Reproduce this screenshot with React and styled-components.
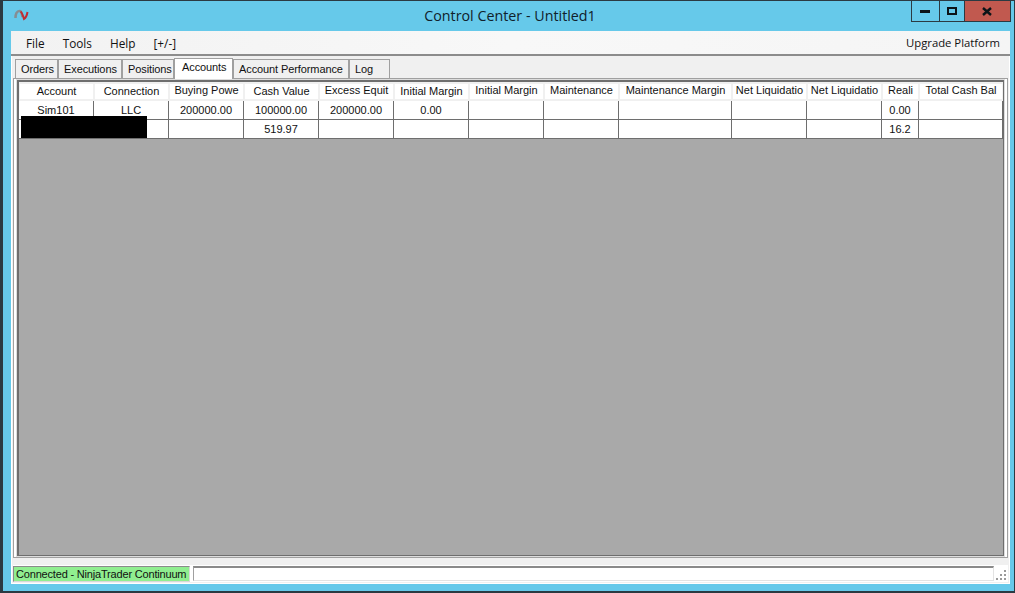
import React from 'react';
import styled, { createGlobalStyle } from 'styled-components';

const GlobalStyle = createGlobalStyle`
  html, body {
    margin: 0;
    padding: 0;
    width: 1015px;
    height: 593px;
    overflow: hidden;
    background: #66c9ea;
  }
  * {
    box-sizing: border-box;
  }
`;

const Window = styled.div`
  display: flex;
  flex-direction: column;
  width: 1015px;
  height: 593px;
  background: #66c9ea;
  border-top: 1px solid #2b3a42;
  border-left: 3px solid #2b3a42;
  border-right: 1px solid #2b3a42;
  border-bottom: 2px solid #2b3a42;
  font-family: 'Liberation Sans', Arial, sans-serif;
  font-size: 11px;
  color: #111;
`;

const TitleBar = styled.div`
  display: grid;
  grid-template-columns: 1fr auto;
  align-items: start;
  height: 30px;
  padding: 0 3px 0 11px;
  flex: none;
`;

const TitleLeft = styled.div`
  display: flex;
  align-items: center;
  height: 29px;
`;

const Title = styled.div`
  flex: 1;
  padding-left: 80px;
  text-align: center;
  font-family: 'Open Sans', sans-serif;
  font-size: 14.3px;
  color: #10212b;
`;

const WindowButtons = styled.div`
  display: flex;
  height: 22px;
  margin-top: -1px;
  border: 1px solid #2b3a42;
`;

const WindowButton = styled.div`
  display: flex;
  align-items: center;
  justify-content: center;
  width: ${(props) => props.$width}px;
  background: ${(props) => (props.$close ? '#c1594f' : 'transparent')};
  border-left: ${(props) => (props.$first ? 'none' : '1px solid #2b3a42')};
`;

const Body = styled.div`
  display: flex;
  flex-direction: column;
  flex: 1;
  min-height: 0;
  margin: 0 4px 7px 8px;
  background: #fff;
  padding-bottom: 1px;
`;

const MenuBar = styled.div`
  display: flex;
  align-items: center;
  justify-content: space-between;
  height: 25px;
  padding: 0 10px 0 15px;
  background: linear-gradient(90deg, #f2f2f2, #f8f8f8 50%, #f5f5f5);
  border-bottom: 2px solid #8c8c8c;
  font-family: 'Open Sans', sans-serif;
  font-size: 11.3px;
  flex: none;
`;

const MenuItems = styled.div`
  display: flex;
  gap: 18px;
  font-size: 11.8px;
`;

const TabArea = styled.div`
  display: flex;
  flex-direction: column;
  flex: 1;
  min-height: 0;
  margin: 0 1px;
  padding: 1px;
  background: #f0f0f0;
`;

const TabStrip = styled.div`
  display: flex;
  align-items: flex-end;
  height: 21px;
  padding-left: 2px;
  flex: none;
`;

const Tab = styled.div`
  width: ${(props) => props.$width}px;
  height: ${(props) => (props.$active ? 21 : 19)}px;
  margin-bottom: ${(props) => (props.$active ? -1 : 0)}px;
  padding: ${(props) => (props.$active ? '2px 0 0 7px' : '3px 0 0 5px')};
  background: ${(props) => (props.$active ? '#fff' : '#f0f0f0')};
  border: 1px solid #a0a0a0;
  border-bottom: none;
  position: relative;
  z-index: ${(props) => (props.$active ? 1 : 0)};
  letter-spacing: -0.1px;
  white-space: nowrap;
`;

const Panel = styled.div`
  display: flex;
  flex-direction: column;
  flex: 1;
  min-height: 0;
  padding: 1px 0 0 3px;
  background: #fff;
  border: 1px solid #a0a0a0;
  margin-bottom: 7px;
`;

const Grid = styled.div`
  display: flex;
  flex-direction: column;
  flex: 1;
  min-height: 0;
  margin-right: 3px;
  margin-bottom: 1px;
  background: #a9a9a9;
  border-top: 2px solid #6e6e6e;
  border-left: 2px solid #6e6e6e;
  border-right: 1px solid #6e6e6e;
  border-bottom: 1px solid #6e6e6e;
  box-shadow: 0 0 0 1px #ddd;
  position: relative;
`;

const Row = styled.div`
  display: grid;
  grid-template-columns: 75px 75px 75px 75px 75px 75px 75px 75px 113px 75px 75px 37px 84px;
  height: 19px;
  flex: none;
`;

const HeaderCell = styled.div`
  display: flex;
  align-items: center;
  justify-content: center;
  background: #fff;
  border: 2px solid #f0f0f0;
  border-left-width: 1px;
  border-right-width: 1px;
  padding-bottom: ${(props) => (props.$raised ? 4 : 2)}px;
  overflow: hidden;
  white-space: nowrap;
`;

const Cell = styled.div`
  display: flex;
  align-items: center;
  justify-content: center;
  background: #fff;
  border-bottom: 1px solid #6e6e6e;
  border-right: 1px solid #6e6e6e;
  overflow: hidden;
  white-space: nowrap;
`;

const Redaction = styled.div`
  position: absolute;
  left: 2px;
  top: 34px;
  width: 126px;
  height: 22px;
  background: #000;
`;

const StatusBar = styled.div`
  display: flex;
  align-items: center;
  gap: 3px;
  height: 17px;
  background: #fff;
  flex: none;
  position: relative;
`;

const StatusLabel = styled.div`
  display: flex;
  align-items: center;
  width: 177px;
  height: 16px;
  padding-left: 2px;
  background: #90ee90;
  border: 1px solid #d8d8d8;
  border-top-color: #8a8a8a;
  border-left-color: #8a8a8a;
  letter-spacing: -0.18px;
  white-space: nowrap;
`;

const StatusBox = styled.div`
  width: 801px;
  height: 15px;
  background: #fff;
  border: 1px solid #e3e3e3;
  border-top: 2px solid #8a8a8a;
  border-left: 1px solid #a0a0a0;
`;

const Grip = styled.svg`
  position: absolute;
  right: 1px;
  bottom: 1px;
`;

const Logo = () => (
  <svg width="15" height="13" viewBox="0 0 15 13">
    <path d="M1.5 9C1.5 5 3 2 5.5 2S8 6 8.5 8" fill="none" stroke="#858e94" strokeWidth="2.6" />
    <path d="M6.5 2.5c1.5 1 2.5 4 3.5 7.5C11.5 9 13 6 13.5 3" fill="none" stroke="#c02c32" strokeWidth="2" />
  </svg>
);

const headers = [
  { label: 'Account' },
  { label: 'Connection' },
  { label: 'Buying Powe', raised: true },
  { label: 'Cash Value' },
  { label: 'Excess Equit', raised: true },
  { label: 'Initial Margin' },
  { label: 'Initial Margin', raised: true },
  { label: 'Maintenance', raised: true },
  { label: 'Maintenance Margin', raised: true },
  { label: 'Net Liquidatio', raised: true },
  { label: 'Net Liquidatio', raised: true },
  { label: 'Reali', raised: true },
  { label: 'Total Cash Bal', raised: true },
];

const rows = [
  ['Sim101', 'LLC', '200000.00', '100000.00', '200000.00', '0.00', '', '', '', '', '', '0.00', ''],
  ['', '', '', '519.97', '', '', '', '', '', '', '', '16.2', ''],
];

const tabs = [
  { label: 'Orders', width: 43 },
  { label: 'Executions', width: 64 },
  { label: 'Positions', width: 52 },
  { label: 'Accounts', width: 59, active: true },
  { label: 'Account Performance', width: 116 },
  { label: 'Log', width: 41 },
];

export default function App() {
  return (
    <>
      <GlobalStyle />
      <Window>
        <TitleBar>
          <TitleLeft>
            <Logo />
            <Title>Control Center - Untitled1</Title>
          </TitleLeft>
          <WindowButtons>
            <WindowButton $width={27} $first>
              <svg width="11" height="4"><rect width="10" height="3" y="1" fill="#0c1418" /></svg>
            </WindowButton>
            <WindowButton $width={25}>
              <svg width="11" height="9"><rect x="1" y="1" width="8" height="6" fill="none" stroke="#0c1418" strokeWidth="2" /></svg>
            </WindowButton>
            <WindowButton $width={46} $close>
              <svg width="11" height="9" viewBox="0 0 11 9"><path d="M1 1l8 7M9 1l-8 7" stroke="#0c1418" strokeWidth="2.4" fill="none" /></svg>
            </WindowButton>
          </WindowButtons>
        </TitleBar>
        <Body>
          <MenuBar>
            <MenuItems>
              <span>File</span>
              <span>Tools</span>
              <span>Help</span>
              <span>[+/-]</span>
            </MenuItems>
            <span>Upgrade Platform</span>
          </MenuBar>
          <TabArea>
            <TabStrip>
              {tabs.map((tab) => (
                <Tab key={tab.label} $width={tab.width} $active={tab.active}>{tab.label}</Tab>
              ))}
            </TabStrip>
            <Panel>
              <Grid>
                <Row>
                  {headers.map((h, i) => (
                    <HeaderCell key={i} $raised={h.raised}>{h.label}</HeaderCell>
                  ))}
                </Row>
                {rows.map((row, r) => (
                  <Row key={r}>
                    {row.map((value, c) => (
                      <Cell key={c}>{value}</Cell>
                    ))}
                  </Row>
                ))}
                <Redaction />
              </Grid>
            </Panel>
            <StatusBar>
              <StatusLabel>Connected - NinjaTrader Continuum</StatusLabel>
              <StatusBox />
              <Grip width="11" height="11" viewBox="0 0 11 11">
                <g fill="#9a9a9a">
                  <rect x="8" y="0" width="2" height="2" />
                  <rect x="4" y="4" width="2" height="2" />
                  <rect x="8" y="4" width="2" height="2" />
                  <rect x="0" y="8" width="2" height="2" />
                  <rect x="4" y="8" width="2" height="2" />
                  <rect x="8" y="8" width="2" height="2" />
                </g>
              </Grip>
            </StatusBar>
          </TabArea>
        </Body>
      </Window>
    </>
  );
}
